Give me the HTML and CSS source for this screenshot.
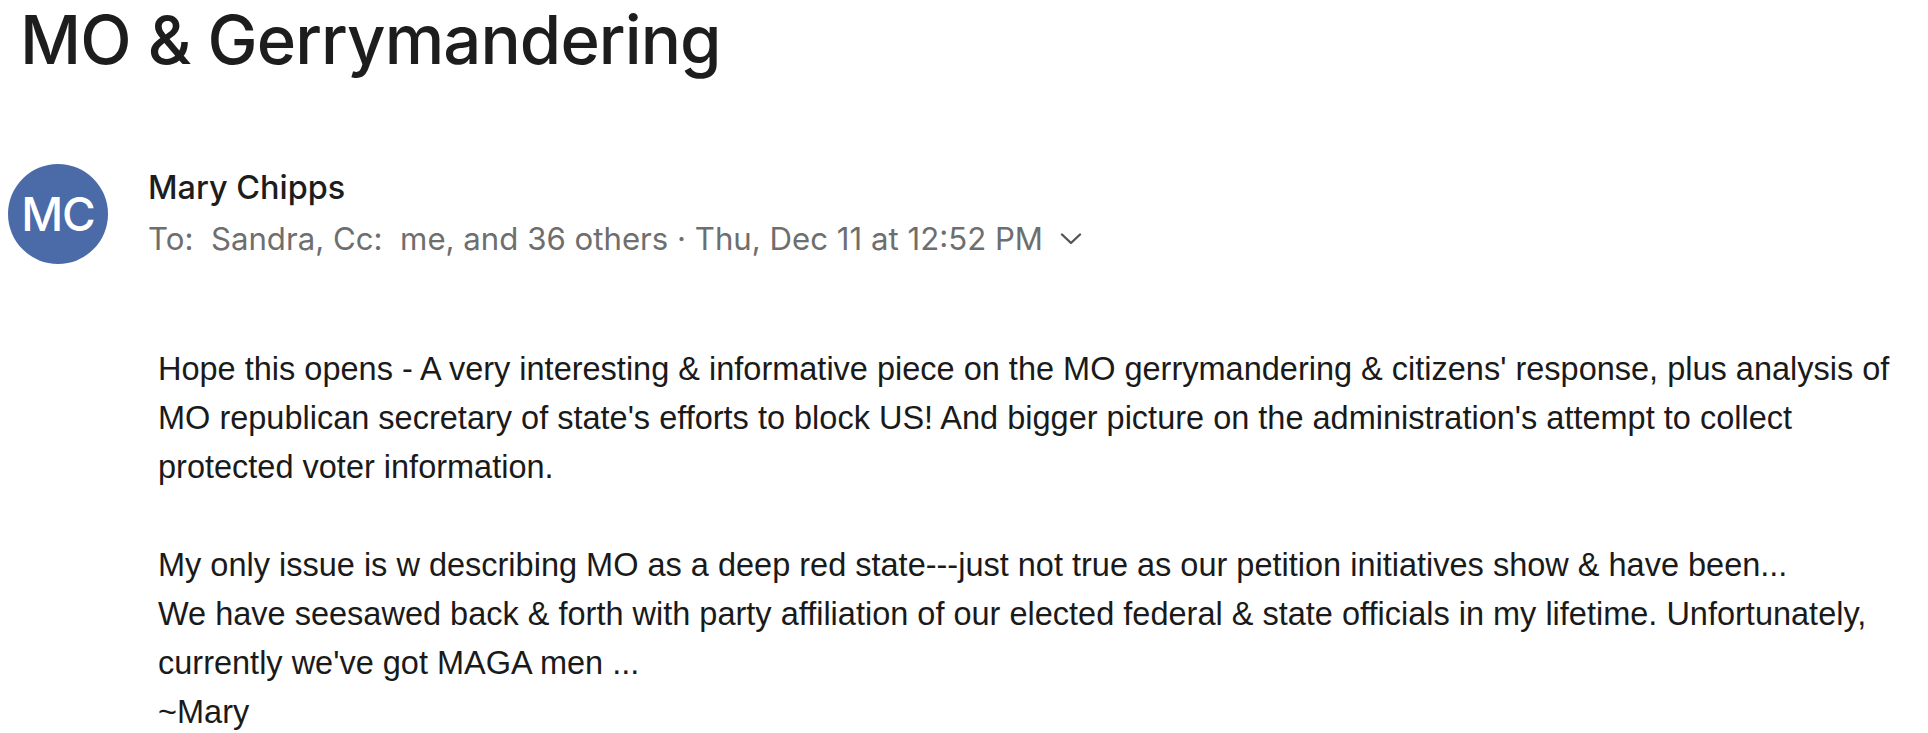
FILE: index.html
```html
<!DOCTYPE html>
<html>
<head>
<meta charset="utf-8">
<link rel="stylesheet" href="styles.css">
</head>
<body>
<div class="page">
  <h1 class="subject">MO &amp; Gerrymandering</h1>
  <div class="header">
    <div class="avatar">MC</div>
    <div class="meta">
      <div class="sender">Mary Chipps</div>
      <div class="recipients">
        <span>To:&nbsp; Sandra, Cc:&nbsp; me, and 36 others · Thu, Dec 11 at 12:52 PM</span>
        <svg class="chev" width="22" height="12" viewBox="0 0 22 12"><path d="M2 1.5 L11 10 L20 1.5" fill="none" stroke="#555" stroke-width="2.4" stroke-linecap="round" stroke-linejoin="round"/></svg>
      </div>
    </div>
  </div>
  <div class="body">
    <p>Hope this opens - A very interesting &amp; informative piece on the MO gerrymandering &amp; citizens' response, plus analysis of MO republican secretary of state's efforts to block US! And bigger picture on the administration's attempt to collect protected voter information.</p>
    <p>My only issue is w describing MO as a deep red state---just not true as our petition initiatives show &amp; have been...<br>We have seesawed back &amp; forth with party affiliation of our elected federal &amp; state officials in my lifetime. Unfortunately, currently we've got MAGA men ...<br>~Mary</p>
  </div>
</div>
</body>
</html>
```
FILE: styles.css
```css
html, body {
  margin: 0;
  padding: 0;
  background: #ffffff;
  overflow: hidden;
}
.page {
  padding: 0 0 0 8px;
}
.subject {
  margin: 0;
  padding: 0 0 0 12px;
  font-family: Inter, "Noto Sans", sans-serif;
  font-weight: 500;
  font-size: 67px;
  line-height: 80px;
  color: #1d1d1d;
  letter-spacing: -0.9px;
}
.header {
  display: flex;
  align-items: flex-start;
  margin-top: 84px;
  gap: 40px;
}
.avatar {
  width: 100px;
  height: 100px;
  border-radius: 50%;
  background: #4a6aa8;
  color: #fff;
  font-family: Inter, "Noto Sans", sans-serif;
  font-size: 46px;
  font-weight: 500;
  display: flex;
  align-items: center;
  justify-content: center;
  letter-spacing: -1px;
}
.meta {
  display: flex;
  flex-direction: column;
  font-family: Inter, "Noto Sans", sans-serif;
  padding-top: 4px;
}
.sender {
  font-size: 32.4px;
  line-height: 40px;
  color: #1d1d1d;
  font-weight: 500;
}
.recipients {
  font-size: 31.2px;
  line-height: 48px;
  color: #6e6e6e;
  display: flex;
  align-items: center;
  gap: 17px;
  margin-top: 7px;
}
.body {
  margin-top: 81px;
  padding-left: 150px;
  font-family: "Liberation Sans", Arial, sans-serif;
  font-size: 32.5px;
  line-height: 49px;
  color: #1a1a1a;
  max-width: 1770px;
}
.body p {
  margin: 0 0 49px 0;
}
.body p:last-child {
  margin-bottom: 0;
}
```
